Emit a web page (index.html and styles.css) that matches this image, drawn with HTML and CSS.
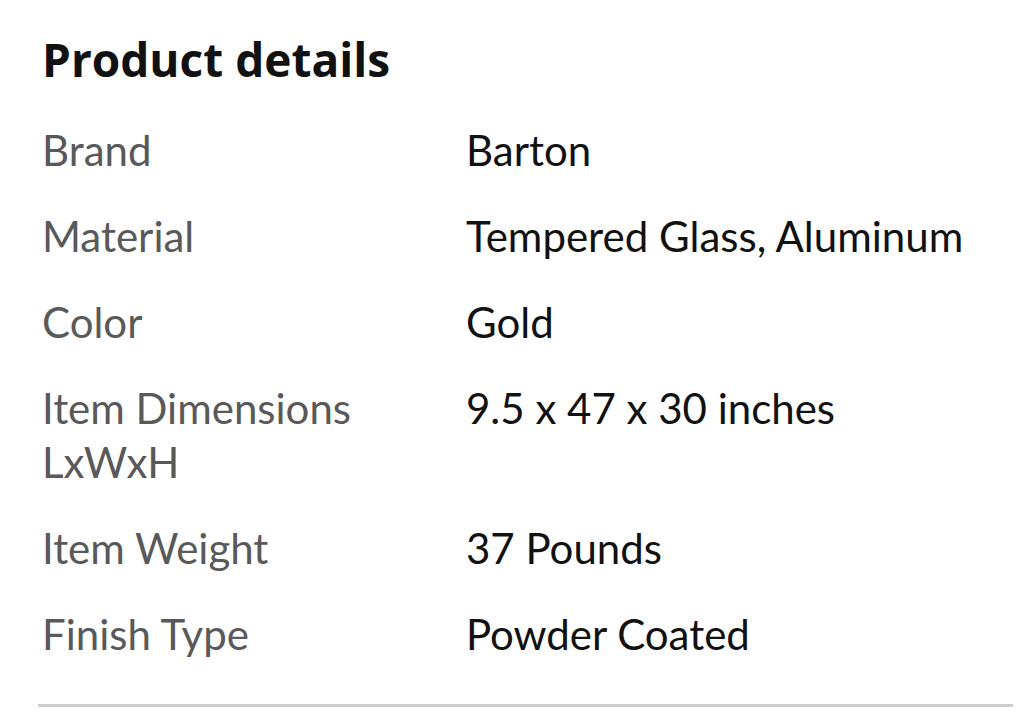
FILE: index.html
```html
<!DOCTYPE html>
<html lang="en">
<head>
<meta charset="utf-8">
<title>Product details</title>
<link rel="stylesheet" href="styles.css">
</head>
<body>
<section class="product-details">
  <h2 class="title">Product details</h2>
  <dl class="details">
    <dt class="label">Brand</dt>
    <dd class="value">Barton</dd>
    <dt class="label">Material</dt>
    <dd class="value">Tempered Glass, Aluminum</dd>
    <dt class="label">Color</dt>
    <dd class="value">Gold</dd>
    <dt class="label">Item Dimensions LxWxH</dt>
    <dd class="value">9.5 x 47 x 30 inches</dd>
    <dt class="label">Item Weight</dt>
    <dd class="value">37 Pounds</dd>
    <dt class="label">Finish Type</dt>
    <dd class="value">Powder Coated</dd>
  </dl>
  <hr class="divider">
</section>
</body>
</html>
```
FILE: styles.css
```css
html, body {
  margin: 0;
  padding: 0;
  background: #ffffff;
}
body {
  font-family: "Lato", "Open Sans", sans-serif;
  color: #0f1111;
  width: 1020px;
  height: 718px;
  overflow: hidden;
}
.product-details {
  padding: 31px 7px 0 42px;
}
.title {
  margin: 0 0 36px 0;
  font-family: "Open Sans", sans-serif;
  font-size: 46px;
  line-height: 56px;
  font-weight: 700;
  color: #111111;
}
.details {
  margin: 0;
  display: grid;
  grid-template-columns: 424px 1fr;
  row-gap: 32px;
}
.label, .value {
  margin: 0;
  font-size: 42px;
  line-height: 54px;
}
.label {
  color: #595959;
  width: 380px;
}
.value {
  color: #111111;
}
.divider {
  margin: 43px 0 0 -4px;
  border: 0;
  height: 3px;
  background: #cccccc;
}
```
